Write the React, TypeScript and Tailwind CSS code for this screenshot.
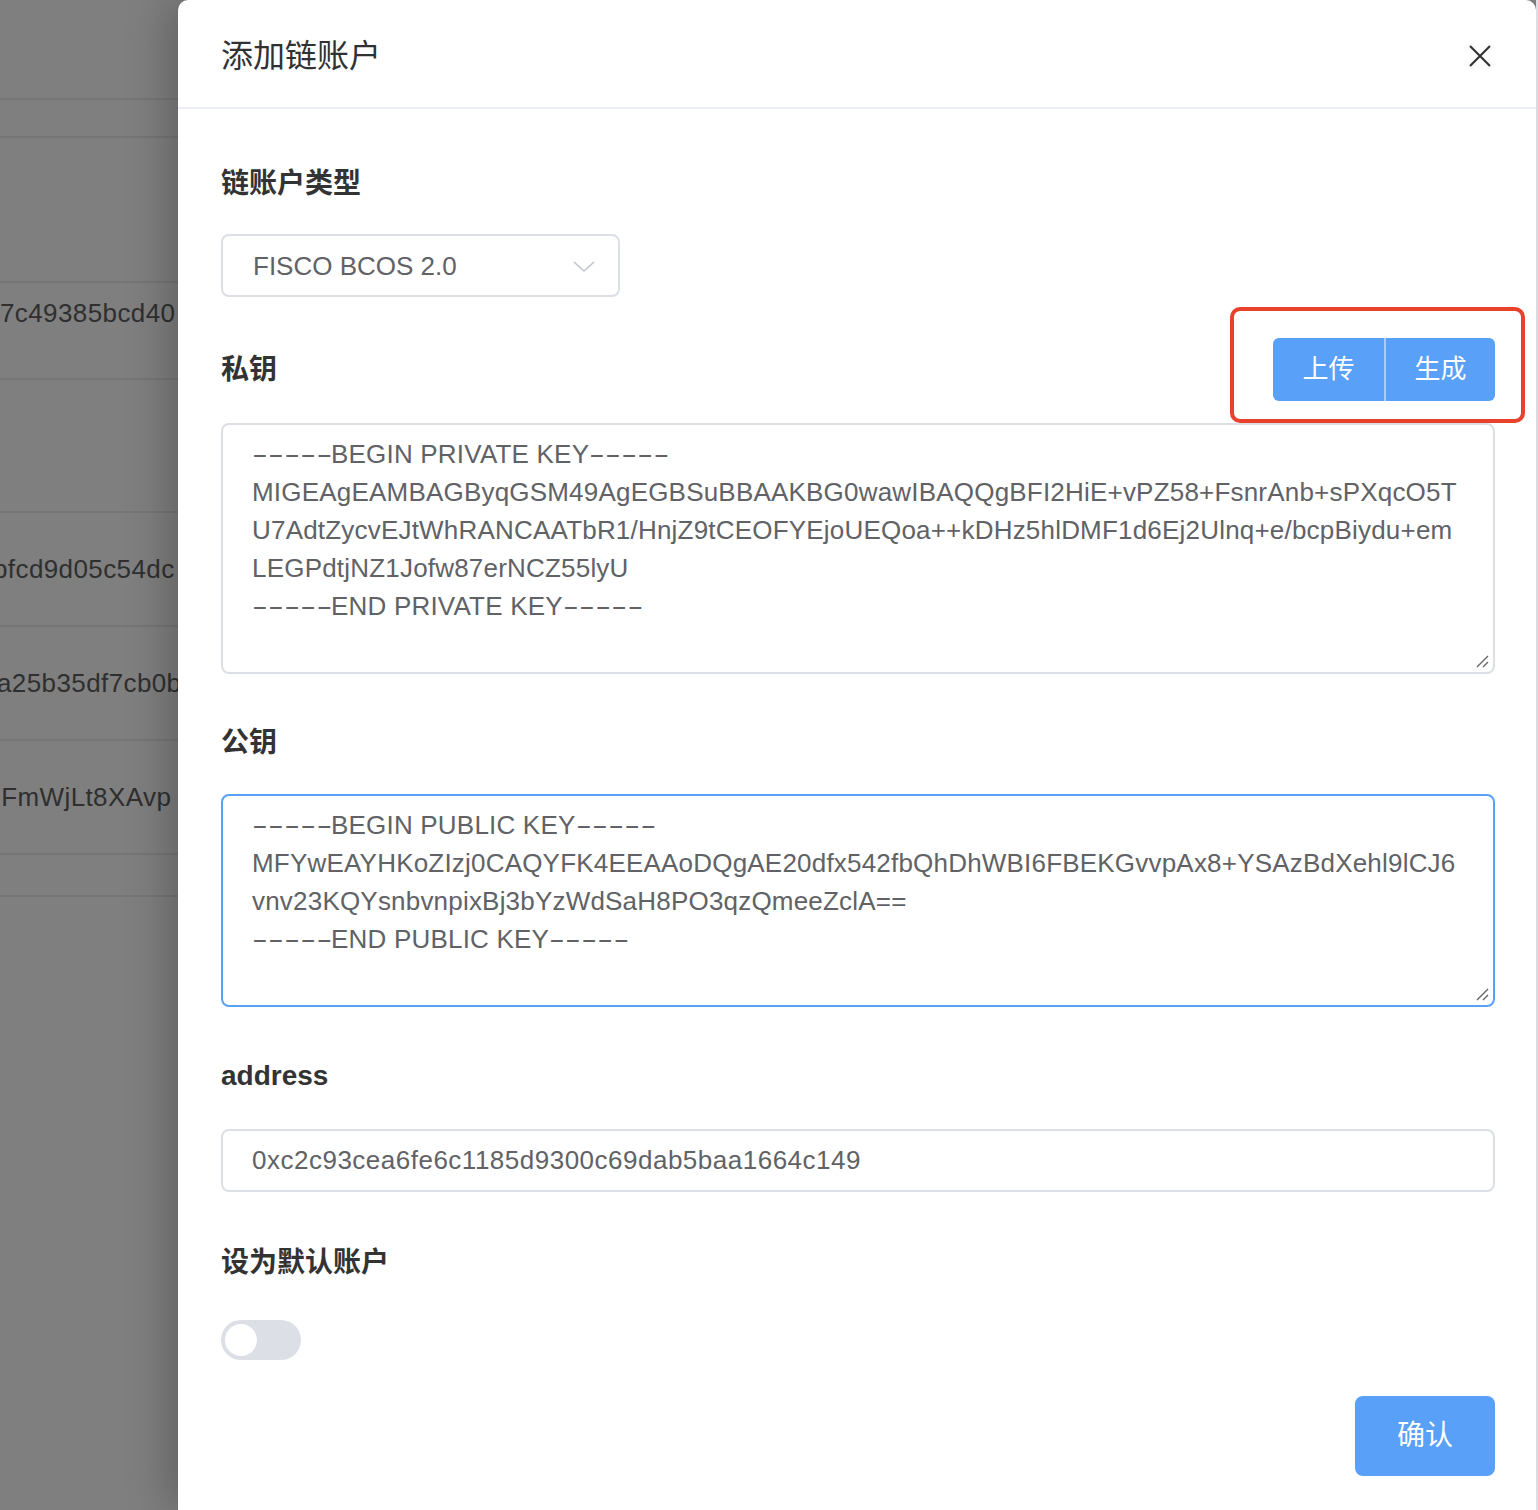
import React from "react";

const FONT = {
  fontFamily: '"Liberation Sans", "Noto Sans CJK SC", sans-serif',
};

const privateKeyBody = [
  "MIGEAgEAMBAGByqGSM49AgEGBSuBBAAKBG0wawIBAQQgBFI2HiE+vPZ58+FsnrAnb+sPXqcO5T",
  "U7AdtZycvEJtWhRANCAATbR1/HnjZ9tCEOFYEjoUEQoa++kDHz5hlDMF1d6Ej2Ulnq+e/bcpBiydu+em",
  "LEGPdtjNZ1Jofw87erNCZ55lyU",
];

const publicKeyBody = [
  "MFYwEAYHKoZIzj0CAQYFK4EEAAoDQgAE20dfx542fbQhDhWBI6FBEKGvvpAx8+YSAzBdXehl9lCJ6",
  "vnv23KQYsnbvnpixBj3bYzWdSaH8PO3qzQmeeZclA==",
];

function BackgroundTable() {
  return (
    <div className="w-[178px] shrink-0 h-full overflow-hidden bg-[#7f7f7f] text-[26px] tracking-[0.4px] text-[#2f2f2f] whitespace-nowrap">
      <div className="h-[100px] border-b-2 border-[#767676]" />
      <div className="h-[38px] border-b-2 border-[#767676]" />
      <div className="h-[145px] border-b-2 border-[#767676]" />
      <div className="h-[97px] border-b-2 border-[#767676] pt-[14px] leading-[32px]">
        7c49385bcd40
      </div>
      <div className="h-[133px] border-b-2 border-[#767676]" />
      <div className="h-[114px] border-b-2 border-[#767676] flex items-center">
        <span className="-ml-[7px]">bfcd9d05c54dc</span>
      </div>
      <div className="h-[114px] border-b-2 border-[#767676] flex items-center">
        <span className="-ml-[3px]">a25b35df7cb0b</span>
      </div>
      <div className="h-[114px] border-b-2 border-[#767676] flex items-center">
        <span className="-ml-[5px]">lFmWjLt8XAvp</span>
      </div>
      <div className="h-[42px] border-b-2 border-[#767676]" />
    </div>
  );
}

function FieldLabel({ children }: { children: React.ReactNode }) {
  return (
    <div className="h-[40px] leading-[40px] text-[28px] font-bold text-[#333333]">
      {children}
    </div>
  );
}

function Chevron() {
  return (
    <svg width="24" height="14" viewBox="0 0 24 14" fill="none">
      <path d="M2 2 L12 11 L22 2" stroke="#c0c4cc" strokeWidth="1.6" />
    </svg>
  );
}

function CloseIcon() {
  return (
    <svg width="24" height="24" viewBox="0 0 24 24" fill="none">
      <path d="M2 2 L22 22 M22 2 L2 22" stroke="#333333" strokeWidth="2.2" />
    </svg>
  );
}

function ResizeGrip() {
  return (
    <svg
      className="absolute right-[3px] bottom-[3px]"
      width="16"
      height="16"
      viewBox="0 0 16 16"
      fill="none"
    >
      <path d="M3 14 L14 3 M9 14 L14 9" stroke="#666666" strokeWidth="1.4" />
    </svg>
  );
}

/* PEM armour dashes, drawn wide like the system UI font */
function Dashes() {
  return (
    <span className="inline-block w-[79px] overflow-visible">
      <span className="inline-block origin-left scale-x-[1.82]">-----</span>
    </span>
  );
}

function KeyBox({
  kind,
  body,
  height,
  focused,
}: {
  kind: string;
  body: string[];
  height: string;
  focused?: boolean;
}) {
  return (
    <div
      className={`relative w-full ${height} rounded-[8px] border-2 ${
        focused ? "border-[#58a0f8]" : "border-[#dcdfe6]"
      } pl-[29px] pr-[20px] pt-[10px] text-[26px] leading-[38px] tracking-[0.2px] text-[#606266] overflow-hidden whitespace-pre`}
    >
      <div>
        <Dashes />
        {`BEGIN ${kind} KEY`}
        <Dashes />
      </div>
      {body.map((line) => (
        <div key={line}>{line}</div>
      ))}
      <div>
        <Dashes />
        {`END ${kind} KEY`}
        <Dashes />
      </div>
      <ResizeGrip />
    </div>
  );
}

export default function App() {
  return (
    <div style={FONT} className="w-[1538px] h-[1510px] flex overflow-hidden bg-[#7f7f7f]">
      <BackgroundTable />

      <div className="relative z-10 flex-1 h-full bg-white rounded-t-[10px] shadow-[-12px_0_40px_rgba(0,0,0,0.22)] flex flex-col">
        {/* header */}
        <div className="h-[109px] border-b-2 border-[#ebeef5] flex items-center justify-between pl-[43px] pr-[44px] pt-[4px]">
          <div className="text-[32px] text-[#303133] leading-[40px]">添加链账户</div>
          <CloseIcon />
        </div>

        {/* body */}
        <div className="flex flex-col pl-[43px] pr-[41px] pt-[55px]">
          <FieldLabel>链账户类型</FieldLabel>
          <div className="mt-[30px] w-[399px] h-[63px] border-2 border-[#dcdfe6] rounded-[8px] flex items-center justify-between pl-[30px] pr-[22px] pt-[2px]">
            <span className="text-[26px] text-[#606266]">FISCO BCOS 2.0</span>
            <Chevron />
          </div>

          <div className="mt-[41px] flex items-center justify-between h-[63px]">
            <FieldLabel>私钥</FieldLabel>
            <div className="relative">
              <div className="flex h-[63px] rounded-[6px] overflow-hidden bg-[#58a0f8] text-white text-[26px]">
                <button className="w-[111px] h-full flex items-center justify-center">上传</button>
                <div className="w-[2px] h-full bg-[#a9cdfa]" />
                <button className="w-[109px] h-full flex items-center justify-center">生成</button>
              </div>
              <div className="absolute -left-[43px] -right-[30px] -top-[31px] -bottom-[22px] border-[4px] border-[#e8412c] rounded-[10px] pointer-events-none" />
            </div>
          </div>

          <div className="mt-[22px]">
            <KeyBox kind="PRIVATE" body={privateKeyBody} height="h-[251px]" />
          </div>

          <div className="mt-[49px]">
            <FieldLabel>公钥</FieldLabel>
          </div>
          <div className="mt-[31px]">
            <KeyBox kind="PUBLIC" body={publicKeyBody} height="h-[213px]" focused />
          </div>

          <div className="mt-[49px]">
            <FieldLabel>address</FieldLabel>
          </div>
          <div className="mt-[33px] w-full h-[63px] border-2 border-[#dcdfe6] rounded-[8px] flex items-center pl-[29px]">
            <span className="text-[26px] tracking-[0.5px] text-[#606266]">
              0xc2c93cea6fe6c1185d9300c69dab5baa1664c149
            </span>
          </div>

          <div className="mt-[51px]">
            <FieldLabel>设为默认账户</FieldLabel>
          </div>
          <div className="mt-[37px] w-[80px] h-[40px] rounded-full bg-[#dcdfe6] p-[4px] flex items-center">
            <div className="w-[32px] h-[32px] rounded-full bg-white" />
          </div>

          <div className="mt-[36px] flex justify-end">
            <button className="w-[140px] h-[80px] rounded-[8px] bg-[#58a0f8] text-white text-[28px]">
              确认
            </button>
          </div>
        </div>
      </div>

      <div className="w-[2px] h-full bg-[#e6e8ef]" />
    </div>
  );
}
